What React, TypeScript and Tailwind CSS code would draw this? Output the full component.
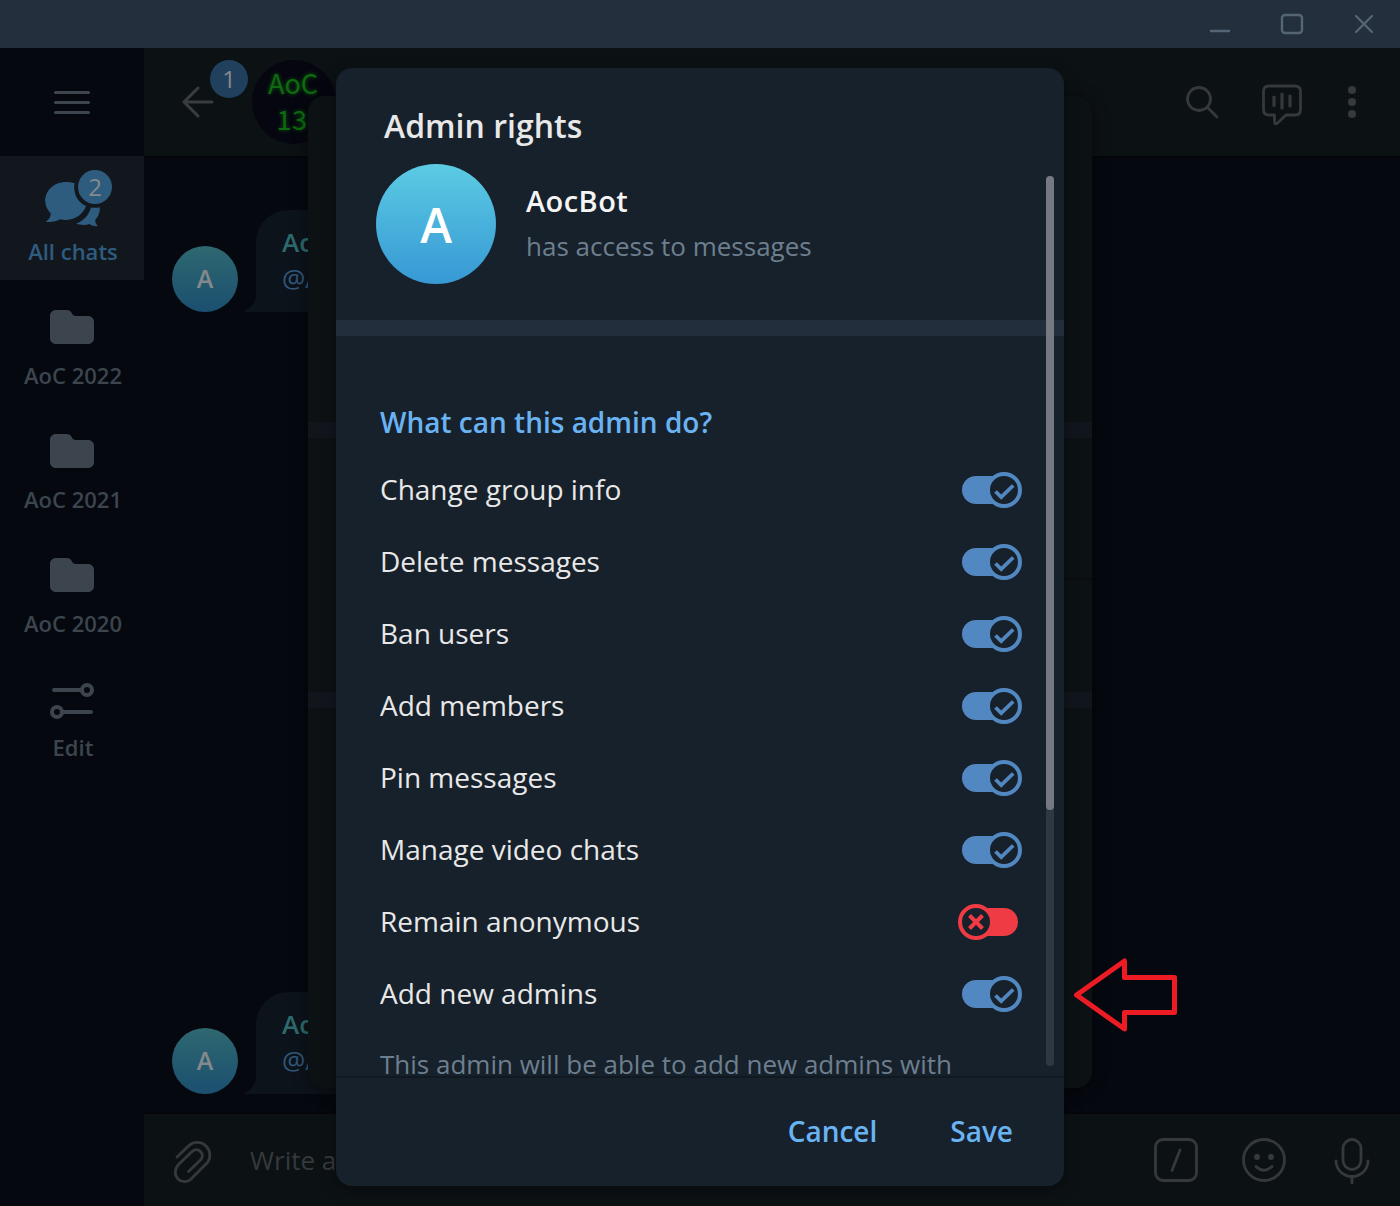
import React from "react";

const rights = [
  { label: "Change group info", on: true },
  { label: "Delete messages", on: true },
  { label: "Ban users", on: true },
  { label: "Add members", on: true },
  { label: "Pin messages", on: true },
  { label: "Manage video chats", on: true },
  { label: "Remain anonymous", on: false },
  { label: "Add new admins", on: true },
];

function TitleBar() {
  return (
    <div className="flex h-12 shrink-0 items-center justify-end bg-[#242f3d] text-[#546675]">
      <svg className="h-12 w-[72px]" viewBox="1184 0 72 48" fill="none" stroke="currentColor" strokeWidth="2.500" strokeLinecap="round">
        <path d="M1211 31h18" />
      </svg>
      <svg className="h-12 w-[72px]" viewBox="1256 0 72 48" fill="none" stroke="currentColor" strokeWidth="2.400">
        <rect x="1282" y="15" width="20" height="18" rx="3" />
      </svg>
      <svg className="h-12 w-[72px]" viewBox="1328 0 72 48" fill="none" stroke="currentColor" strokeWidth="2.300" strokeLinecap="round">
        <path d="M1356 16l16 16M1372 16l-16 16" />
      </svg>
    </div>
  );
}

function FolderIcon() {
  return (
    <svg className="h-[34px] w-11" viewBox="0 0 44 34" fill="#3c454d">
      <path d="M6 0H16.500C19.500 0 21 1.500 21.800 3.200C22.700 5 23.800 6 26 6H38C41.500 6 44 8.500 44 12V28C44 31.500 41.500 34 38 34H6C2.500 34 0 31.500 0 28V6C0 2.500 2.500 0 6 0Z" />
    </svg>
  );
}

function ChatsIcon() {
  return (
    <svg className="h-[60px] w-[72px]" viewBox="42 168 72 60">
      <path
        fill="#2e5c7f"
        d="M66 182C54 182 45.200 190.500 45.200 201C45.200 206 47.500 210.200 50.800 213.400C50.600 217 49 219.300 46.300 221.200C46 221.700 46.400 222 47 222C52 222.400 56.500 221.500 59.800 219.300C62 219.900 64 220.100 66.500 220C76 219.500 83.500 213.500 86 206C79 203 74.200 196 74.200 187.500C74.200 186 74.300 184.500 74.600 183.300C72 182.400 69 182 66 182Z"
      />
      <path
        fill="#2e5c7f"
        d="M91 207.500C94 208 97 208 99.800 207.300C100.200 212 98.800 216 95.200 220C95.200 222.500 96 224 97.300 225.300C97.600 225.900 97.200 226.200 96.500 226.200C93.500 226.200 91.500 225.600 89.500 224C85 225.400 80 225 76.200 223.700C83.500 221 89 215 91 207.500Z"
      />
      <circle cx="95" cy="187" r="17" fill="#2e5c7f" />
      <text x="95" y="195.500" textAnchor="middle" fontSize="24" fill="#85898c" className="font-['Open_Sans'] font-medium">2</text>
    </svg>
  );
}

function Sidebar() {
  return (
    <div className="flex w-36 shrink-0 flex-col bg-[#05080f] text-[22px] font-semibold leading-8 text-[#3c454d]">
      <div className="flex h-[108px] flex-col items-center justify-center gap-[7px]">
        <div className="h-[3px] w-9 rounded-full bg-[#3c454d]" />
        <div className="h-[3px] w-9 rounded-full bg-[#3c454d]" />
        <div className="h-[3px] w-9 rounded-full bg-[#3c454d]" />
      </div>
      <div className="flex h-[124px] flex-col items-center bg-[#12171e] pt-3">
        <div className="pl-3">
          <ChatsIcon />
        </div>
        <span className="pl-0.5 pt-[7px] text-[#2e5c7f]">All chats</span>
      </div>
      {["AoC 2022", "AoC 2021", "AoC 2020"].map((name) => (
        <div key={name} className="flex h-[124px] flex-col items-center pt-[30px]">
          <FolderIcon />
          <span className="pl-0.5 pt-[15px]">{name}</span>
        </div>
      ))}
      <div className="flex h-[124px] flex-col items-center pt-[30px]">
        <svg className="h-[38px] w-11" viewBox="50 682 44 38" fill="none" stroke="#3c454d" strokeWidth="4" strokeLinecap="round">
          <path d="M54 690h27M64 712h27" />
          <circle cx="87" cy="690" r="5" />
          <circle cx="57" cy="712" r="5" />
        </svg>
        <span className="pl-0.5 pt-[11px]">Edit</span>
      </div>
    </div>
  );
}

function ChatHeader() {
  return (
    <div className="flex h-[110px] shrink-0 items-center border-b-2 border-[#04060a] bg-[#0c1114]">
      <svg className="h-[108px] w-[108px]" viewBox="144 48 108 108">
        <path d="M212 102h-28M198 88l-14 14l14 14" fill="none" stroke="#393d40" strokeWidth="3" strokeLinecap="round" strokeLinejoin="round" />
        <circle cx="229" cy="79" r="19" fill="#21405d" />
        <text x="229" y="87.500" textAnchor="middle" fontSize="24" fill="#85898c" className="font-['Open_Sans'] font-medium">1</text>
      </svg>
      <div className="flex size-[84px] flex-col items-center justify-center rounded-full bg-[#060610] pb-0.5 pr-0.5 font-['Noto_Sans_CJK_SC',sans-serif] text-[27px] leading-9 text-[#0e6a10] [text-shadow:0_0_4px_#0b5a0d]">
        <span>AoC</span>
        <span className="pr-0.5 tracking-[0.5px]">13</span>
      </div>
      <svg className="ml-auto h-[108px] w-[220px]" viewBox="1180 48 220 108" fill="none" stroke="#35393d" strokeWidth="2.800" strokeLinecap="round" strokeLinejoin="round">
        <circle cx="1199" cy="99" r="11.500" />
        <path d="M1207.500 107.500l9.500 9.500" />
        <path d="M1269 86h26q5.500 0 5.500 5.500v18q0 5.500 -5.500 5.500h-9l-8.500 8q-3 2 -3 -1.500v-6.500h-5.500q-5.500 0 -5.500 -5.500v-18q0 -5.500 5.500 -5.500z" />
        <path d="M1274 97v8.500M1282 94v14M1290 96v10" strokeWidth="3.200" />
        <g fill="#35393d" stroke="none">
          <circle cx="1352" cy="90" r="4" />
          <circle cx="1352" cy="102" r="4" />
          <circle cx="1352" cy="114" r="4" />
        </g>
      </svg>
    </div>
  );
}

function Message() {
  return (
    <div className="flex items-end pl-7">
      <div className="flex size-[66px] items-center justify-center rounded-full bg-linear-to-b from-[#2e6870] to-[#1b4f6f] text-[25px] font-semibold text-[#85898c]">
        A
      </div>
      <svg className="ml-1.5 h-[102px] w-3" viewBox="0 0 12 102" fill="#0c131a">
        <path d="M12 86C11 93 7 98 1 100.500C-0.500 101.300 0 102 1 102H12Z" />
      </svg>
      <div className="h-[102px] w-80 rounded-tl-[32px] bg-[#0c131a] pl-[26px] pt-[14px] text-[26px] leading-9">
        <div className="font-semibold text-[#2c6a6e]">AocBot</div>
        <div className="text-[#31587b]">@AocBot</div>
      </div>
    </div>
  );
}

function Composer() {
  return (
    <div className="flex h-[94px] shrink-0 items-center border-t-2 border-[#04060a] bg-[#0c1114] text-[26px] text-[#35393d]">
      <svg className="h-[92px] w-[106px]" viewBox="144 1114 106 92" fill="none" stroke="currentColor" strokeWidth="2.800" strokeLinecap="round" strokeLinejoin="round">
        <path d="M177 1157L188.500 1146C193 1141.500 201 1141 206 1146C211 1151 211 1159 206.500 1163.500L193 1177C189 1182.500 182 1183 178 1179C174 1175 174.500 1168.500 179 1164L191.500 1152C194.500 1149 198 1149 200.500 1151.500C203 1154 203 1157.500 200 1160.500L188.500 1171.500" />
      </svg>
      <span>Write a message...</span>
      <svg className="ml-auto h-[92px] w-[260px]" viewBox="1140 1114 260 92" fill="none" stroke="currentColor" strokeWidth="2.800" strokeLinecap="round" strokeLinejoin="round">
        <rect x="1155.500" y="1139.500" width="41" height="41" rx="7.500" />
        <path d="M1180 1150l-8 20.500" />
        <circle cx="1264" cy="1160" r="20.500" />
        <path d="M1256 1166.500q8 7.500 16 0" />
        <circle cx="1257" cy="1157" r="3" fill="currentColor" stroke="none" />
        <circle cx="1271" cy="1157" r="3" fill="currentColor" stroke="none" />
        <rect x="1343" y="1139.500" width="18" height="30" rx="9" />
        <path d="M1336 1161a16 15.500 0 0 0 32 0M1352 1176.500v6.500" />
      </svg>
    </div>
  );
}

function Toggle({ on }: { on: boolean }) {
  return on ? (
    <svg className="h-9 w-16" viewBox="0 0 64 36" fill="none">
      <rect x="4" y="4" width="56" height="28" rx="14" fill="#5288c1" />
      <circle cx="46" cy="18" r="16" fill="#17212b" stroke="#5288c1" strokeWidth="4" />
      <path d="M37.500 19.500l5.700 5.500l12 -11.500" stroke="#5288c1" strokeWidth="3.800" />
    </svg>
  ) : (
    <svg className="h-9 w-16" viewBox="0 0 64 36" fill="none">
      <rect x="4" y="4" width="56" height="28" rx="14" fill="#ef3b43" />
      <circle cx="18" cy="18" r="16" fill="#17212b" stroke="#ef3b43" strokeWidth="4" />
      <path d="M11.500 11.500l13 13M24.500 11.500l-13 13" stroke="#ef3b43" strokeWidth="4" />
    </svg>
  );
}

function BackDialog() {
  return (
    <div className="absolute left-[308px] top-24 flex h-[992px] w-[784px] flex-col overflow-hidden rounded-2xl bg-[#0c1114] shadow-[0_2px_16px_rgba(0,0,0,0.4)]">
      <div className="mt-[326px] h-4 bg-[#11151c]" />
      <div className="ml-14 mt-[140px] h-0.5 bg-[#090d10]" />
      <div className="mt-[112px] h-4 bg-[#11151c]" />
    </div>
  );
}

function AdminDialog() {
  return (
    <div className="absolute left-[336px] top-[68px] flex h-[1118px] w-[728px] flex-col rounded-2xl bg-[#17212b] shadow-[0_4px_16px_rgba(0,0,0,0.35)]">
      <h1 className="h-24 shrink-0 pl-12 pt-[38px] text-[32px] font-semibold leading-10 text-[#e9e8e8]">Admin rights</h1>
      <div className="flex h-[912px] shrink-0 flex-col">
        <div className="flex h-[156px] shrink-0 items-start pl-10">
          <div className="flex size-[120px] items-center justify-center rounded-full bg-linear-to-b from-[#5ccbe3] to-[#3798d4] pt-0.5 text-[48px] font-semibold text-white">
            A
          </div>
          <div className="pl-[30px] pt-[17px]">
            <div className="text-[29px] font-semibold leading-10 tracking-[0.45px] text-[#f5f5f5]">AocBot</div>
            <div className="pt-[5px] text-[26px] leading-10 text-[#6d7f8f]">has access to messages</div>
          </div>
        </div>
        <div className="h-4 shrink-0 bg-[#232e3c]" />
        <h2 className="mt-[66px] shrink-0 pl-11 text-[28px] font-semibold leading-10 text-[#6ab3f3]">What can this admin do?</h2>
        <div className="mt-3 flex shrink-0 flex-col pl-11 pr-[42px]">
          {rights.map((r) => (
            <div key={r.label} className="flex h-[72px] items-center justify-between">
              <span className="pb-0.5 text-[28px] leading-10 text-[#e9e8e8]">{r.label}</span>
              <Toggle on={r.on} />
            </div>
          ))}
        </div>
        <p className="mt-[14px] shrink-0 pl-11 text-[26px] leading-10 text-[#6d7f8f]">This admin will be able to add new admins with</p>
      </div>
      <div className="flex h-[110px] shrink-0 items-center justify-end gap-[73px] border-t-2 border-[#101921] pb-0.5 pr-[51px] text-[28px] font-semibold leading-10 text-[#6ab3f3]">
        <span>Cancel</span>
        <span>Save</span>
      </div>
      <div className="absolute right-2.5 top-[108px] h-[890px] w-2 rounded-full bg-[#2e3841]">
        <div className="h-[634px] rounded-full bg-[#747982]" />
      </div>
    </div>
  );
}

export default function App() {
  return (
    <div className="relative flex h-[1206px] w-[1400px] flex-col overflow-hidden bg-[#05080f] font-['Open_Sans',sans-serif]">
      <TitleBar />
      <div className="flex min-h-0 flex-1">
        <Sidebar />
        <div className="flex min-w-0 flex-1 flex-col">
          <ChatHeader />
          <div className="flex flex-1 flex-col justify-between pb-[18px] pt-[52px]">
            <Message />
            <Message />
          </div>
          <Composer />
        </div>
      </div>
      <BackDialog />
      <AdminDialog />
      <svg className="absolute left-[1070px] top-[955px] h-[80px] w-[110px]" viewBox="1070 955 110 80" fill="none" stroke="#ed1c24" strokeWidth="5" strokeLinejoin="round">
        <path d="M1076.500 995L1124.500 961V977.500H1174.500V1012.500H1124.500V1029Z" />
      </svg>
    </div>
  );
}
